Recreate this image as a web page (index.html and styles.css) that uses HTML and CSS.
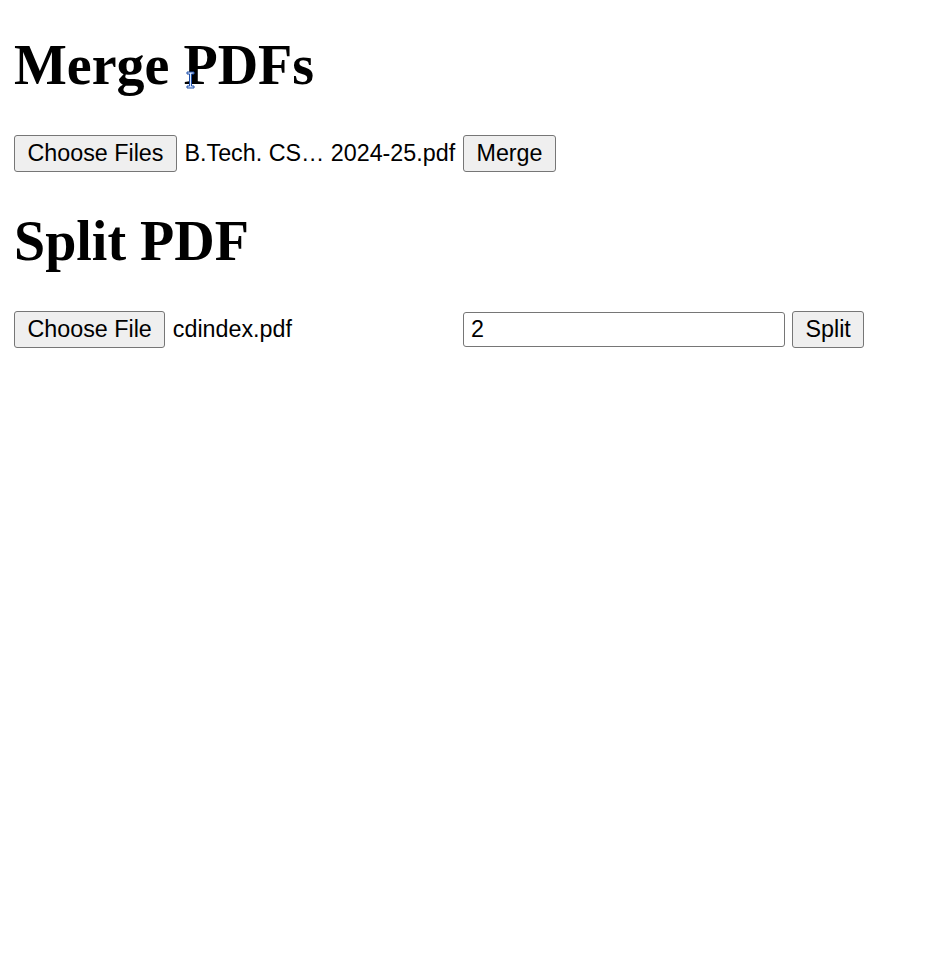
FILE: index.html
```html
<!DOCTYPE html>
<html lang="en">
<head>
<meta charset="utf-8">
<title>PDF Tools</title>
<link rel="stylesheet" href="styles.css">
</head>
<body>
<main class="page">
  <h1 class="title">Merge PDFs</h1>
  <form class="row">
    <div class="file">
      <span class="btn">Choose Files</span>
      <span class="fname">B.Tech. CS… 2024-25.pdf</span>
    </div>
    <button type="button" class="btn">Merge</button>
  </form>
  <h1 class="title">Split PDF</h1>
  <form class="row">
    <div class="file">
      <span class="btn">Choose File</span>
      <span class="fname">cdindex.pdf</span>
    </div>
    <span class="num">2</span>
    <button type="button" class="btn">Split</button>
  </form>
</main>
<svg class="cursor" width="9" height="18" viewBox="0 0 9 18"><path d="M1 1h7v2H5.5v12H8v2H1v-2h2.5V3H1z" fill="#dbe9ff" stroke="#1f4fa8" stroke-width="1"/></svg>
</body>
</html>
```
FILE: styles.css
```css
html, body { background: #fff; }
body {
  margin: 0;
  position: relative;
  font-family: "Liberation Serif", serif;
  color: #000;
}
.page {
  display: flex;
  flex-direction: column;
  align-items: flex-start;
  padding: 33px 14px;
}
.title {
  font-family: "Liberation Serif", serif;
  font-weight: bold;
  font-size: 56px;
  line-height: 64px;
  margin: 0 0 38px;
}
.row {
  display: flex;
  align-items: center;
  height: 37px;
  margin: 0 0 37px;
  font-family: "Liberation Sans", Arial, sans-serif;
  font-size: 23.3px;
}
.file {
  width: 449px;
  display: flex;
  align-items: center;
  gap: 7.5px;
  white-space: nowrap;
}
.btn {
  box-sizing: border-box;
  height: 37px;
  display: inline-flex;
  align-items: center;
  padding: 0 12.5px;
  background: #efefef;
  border: 1px solid #767676;
  border-radius: 3px;
  font-family: "Liberation Sans", Arial, sans-serif;
  font-size: 23.3px;
  color: #000;
  margin: 0;
}
.num {
  box-sizing: border-box;
  width: 322px;
  height: 35px;
  display: inline-flex;
  align-items: center;
  padding: 0 7px;
  border: 1px solid #767676;
  border-radius: 3px;
  margin-right: 7px;
}
.cursor {
  position: absolute;
  left: 186px;
  top: 71px;
}
```
